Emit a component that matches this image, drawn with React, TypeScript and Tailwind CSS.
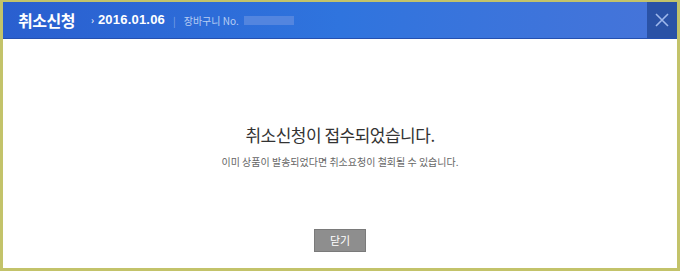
export default function App() {
  return (
    <div className="w-[680px] h-[271px] bg-[#c3c36a] pt-[2px] pl-[3px] pr-[3px] pb-[3px]" style={{ fontFamily: '"Noto Sans CJK KR", "Noto Sans", sans-serif' }}>
      <div className="flex flex-col h-full bg-white">
        {/* Header */}
        <div className="flex h-[37px] items-stretch bg-gradient-to-r from-[#2a5fcf] via-[#2f74de] to-[#4674d9] border-b border-[#2550b0]">
          <div className="flex flex-1 items-center pl-[15px]">
            <span className="text-white text-[16px] font-bold tracking-[-0.5px]">취소신청</span>
            <span className="ml-[16px] text-white text-[10px] leading-none">›</span>
            <span className="ml-[4px] text-white text-[13px] font-bold tracking-[0.2px]" style={{ fontFamily: '"Liberation Sans", sans-serif' }}>2016.01.06</span>
            <span className="ml-[8px] text-[#7fa3e6] text-[10px]">|</span>
            <span className="ml-[8px] text-[#b8cdf3] text-[10px]">장바구니 No.</span>
            <span className="ml-[5px] w-[50px] h-[9px] bg-[#5d8be0] opacity-80"></span>
          </div>
          <button className="w-[30px] flex items-center justify-center bg-[#2a52a6]">
            <svg width="14" height="14" viewBox="0 0 14 14" fill="none" stroke="#9fb8ec" strokeWidth="1.6">
              <path d="M1 1 L13 13 M13 1 L1 13" />
            </svg>
          </button>
        </div>
        {/* Body */}
        <div className="flex flex-1 flex-col items-center">
          <p className="mt-[83px] text-[17px] text-[#333] tracking-[-0.5px]">취소신청이 접수되었습니다.</p>
          <p className="mt-[6px] text-[10px] text-[#666]">이미 상품이 발송되었다면 취소요청이 철회될 수 있습니다.</p>
          <button className="mt-[60px] w-[52px] h-[23px] bg-[#8e8e8e] border border-[#7a7a7a] text-white text-[11px]">닫기</button>
        </div>
      </div>
    </div>
  );
}
